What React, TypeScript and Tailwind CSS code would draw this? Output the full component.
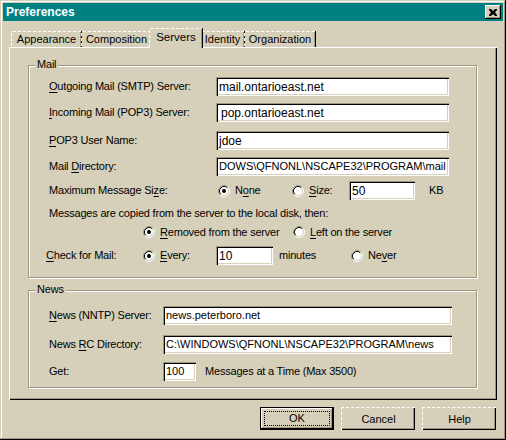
import React from "react";

const BG = "bg-[#d6d0ba]";

function U({ children }: { children: React.ReactNode }) {
  return <span className="underline decoration-1 underline-offset-[2px]">{children}</span>;
}

function Radio({ checked }: { checked?: boolean }) {
  return (
    <svg width="12" height="12" viewBox="0 0 12 12" className="shrink-0">
      <circle cx="6" cy="6" r="4.5" fill="#fff" />
      <path d="M2.11 9.89 A5.5 5.5 0 0 1 9.89 2.11" fill="none" stroke="#9d977f" />
      <path d="M9.89 2.11 A5.5 5.5 0 0 1 2.11 9.89" fill="none" stroke="#fff" />
      <path d="M2.82 9.18 A4.5 4.5 0 0 1 9.18 2.82" fill="none" stroke="#000" />
      <path d="M9.18 2.82 A4.5 4.5 0 0 1 2.82 9.18" fill="none" stroke="#d6d0ba" />
      {checked && <circle cx="6" cy="6" r="2" fill="#000" />}
    </svg>
  );
}

function Field({ value, className = "", small }: { value: string; className?: string; small?: boolean }) {
  return (
    <div
      className={`h-[19px] shrink-0 bg-white flex items-center pl-[3px] overflow-hidden whitespace-nowrap tracking-normal shadow-[inset_1px_1px_#9d977f,inset_2px_2px_#000,inset_-1px_-1px_#fff,inset_-2px_-2px_#d6d0ba] ${
        small ? "text-[11px]" : "text-[12px]"
      } ${className}`}
    >
      {value}
    </div>
  );
}

function Tab({ label, selected, className = "" }: { label: string; selected?: boolean; className?: string }) {
  if (selected) {
    return (
      <div
        className={`relative z-10 -mx-[2px] h-[20px] ${BG} border-t border-l border-dashed border-[#fff] rounded-tl-[2px] shadow-[inset_-1px_0_#9d977f,1px_0_#000] flex items-start justify-center pt-[3px] ${className}`}
      >
        {label}
      </div>
    );
  }
  return (
    <div
      className={`h-[16px] mb-[1px] border-t border-l border-dashed border-[#fff] rounded-tl-[2px] shadow-[inset_-1px_0_#9d977f,1px_0_#000] flex items-center justify-center ${className}`}
    >
      {label}
    </div>
  );
}

function GroupBox({ title, className = "", children }: { title: string; className?: string; children: React.ReactNode }) {
  return (
    <div className={`relative border border-[#9d977f] shadow-[inset_1px_1px_#fff,1px_1px_#fff] ${className}`}>
      <span className={`absolute -top-[7px] left-[6px] px-[2px] leading-none ${BG}`}>{title}</span>
      {children}
    </div>
  );
}

function Button({ label, isDefault }: { label: string; isDefault?: boolean }) {
  if (isDefault) {
    return (
      <div className="w-[74px] h-[23px] border border-black shadow-[inset_-1px_-1px_#000,inset_1px_1px_#fff,inset_-2px_-2px_#9d977f] p-[3px]">
        <div className="w-full h-full border border-dotted border-black flex items-center justify-center">{label}</div>
      </div>
    );
  }
  return (
    <div className="w-[74px] h-[23px] border-t border-l border-dashed border-[#fff] shadow-[inset_-1px_-1px_#000,inset_-2px_-2px_#9d977f] flex items-center justify-center">
      {label}
    </div>
  );
}

export default function App() {
  return (
    <div
      className={`w-[506px] h-[440px] overflow-hidden ${BG} text-black text-[11px] leading-none tracking-[-0.2px] font-['Liberation_Sans',Arial,sans-serif] shadow-[inset_-1px_-1px_#000,inset_1px_1px_#d6d0ba,inset_-2px_-2px_#9d977f,inset_2px_2px_#fff] pt-[3px]`}
    >
      {/* Title bar */}
      <div className="mx-[3px] h-[18px] bg-[#008080] flex items-center justify-between pl-[3px] pr-[2px]">
        <span className="text-white font-bold text-[12px] tracking-normal">Preferences</span>
        <div className={`w-[16px] h-[14px] ${BG} shadow-[inset_-1px_-1px_#000,inset_1px_1px_#fff,inset_-2px_-2px_#9d977f] flex items-center justify-center`}>
          <svg width="8" height="7" viewBox="0 0 8 7">
            <path d="M0 0h2l2 2 2-2h2v1L6 3.5 8 6v1H6L4 5 2 7H0V6l2-2.5L0 1z" fill="#000" />
          </svg>
        </div>
      </div>

      {/* Tabs */}
      <div className="flex items-end h-[20px] mt-[7px] ml-[11px] tracking-normal">
        <Tab label="Appearance" className="w-[70px]" />
        <Tab label="Composition" className="w-[70px]" />
        <Tab label="Servers" selected className="w-[53px] text-[11.5px]" />
        <Tab label="Identity" className="w-[44px]" />
        <Tab label="Organization" className="w-[71px]" />
      </div>

      {/* Panel */}
      <div className="relative -mt-[1px] ml-[9px] w-[488px] h-[353px] border-t border-l border-[#fff] shadow-[inset_-1px_-1px_#000,inset_-2px_-2px_#9d977f] pt-[17px] pl-[18px]">
        <GroupBox title="Mail" className="w-[449px] h-[213px] pl-[20px] pt-[11px]">
          <div className="flex items-center h-[19px]">
            <span className="w-[167px]">
              <U>O</U>utgoing Mail (SMTP) Server:
            </span>
            <Field value="mail.ontarioeast.net" className="w-[233px]" />
          </div>
          <div className="flex items-center h-[19px] mt-[7px]">
            <span className="w-[167px]">
              <U>I</U>ncoming Mail (POP3) Server:
            </span>
            <Field value="pop.ontarioeast.net" className="w-[233px] pl-[5px]" />
          </div>
          <div className="flex items-center h-[19px] mt-[9px]">
            <span className="w-[167px]">
              <U>P</U>OP3 User Name:
            </span>
            <Field value="jdoe" className="w-[233px]" />
          </div>
          <div className="flex items-center h-[19px] mt-[7px]">
            <span className="w-[167px]">
              Mail <U>D</U>irectory:
            </span>
            <Field value="DOWS\QFNONL\NSCAPE32\PROGRAM\mail" small className="w-[233px] pl-[2px]" />
          </div>
          <div className="flex items-center h-[19px] mt-[5px]">
            <span className="w-[169px]">
              Maximum Message Si<U>z</U>e:
            </span>
            <div className="flex items-center gap-[5px] w-[74px]">
              <Radio checked />
              <span>
                N<U>o</U>ne
              </span>
            </div>
            <div className="flex items-center gap-[5px] w-[57px]">
              <Radio />
              <span>
                <U>S</U>ize:
              </span>
            </div>
            <Field value="50" className="w-[66px]" />
            <span className="ml-[14px]">KB</span>
          </div>
          <div className="flex items-center h-[14px] mt-[6px]">Messages are copied from the server to the local disk, then:</div>
          <div className="flex items-center h-[14px] mt-[5px] ml-[94px]">
            <div className="flex items-center gap-[5px] w-[150px]">
              <Radio checked />
              <span>
                <U>R</U>emoved from the server
              </span>
            </div>
            <div className="flex items-center gap-[5px]">
              <Radio />
              <span>
                <U>L</U>eft on the server
              </span>
            </div>
          </div>
          <div className="flex items-center h-[19px] mt-[7px] -ml-[3px]">
            <span className="w-[97px]">
              <U>C</U>heck for Mail:
            </span>
            <div className="flex items-center gap-[5px] w-[73px]">
              <Radio checked />
              <span>
                <U>E</U>very:
              </span>
            </div>
            <Field value="10" className="w-[57px]" />
            <span className="w-[78px] pl-[6px]">minutes</span>
            <div className="flex items-center gap-[5px]">
              <Radio />
              <span>
                Ne<U>v</U>er
              </span>
            </div>
          </div>
        </GroupBox>

        <GroupBox title="News" className="mt-[12px] w-[449px] h-[98px] pl-[20px] pt-[15px]">
          <div className="flex items-center h-[19px]">
            <span className="w-[114px]">
              <U>N</U>ews (NNTP) Server:
            </span>
            <Field value="news.peterboro.net" small className="w-[289px]" />
          </div>
          <div className="flex items-center h-[19px] mt-[10px]">
            <span className="w-[114px]">
              News <U>R</U>C Directory:
            </span>
            <Field value="C:\WINDOWS\QFNONL\NSCAPE32\PROGRAM\news" small className="w-[289px]" />
          </div>
          <div className="flex items-center h-[19px] mt-[8px]">
            <span className="w-[114px]">Get:</span>
            <Field value="100" small className="w-[33px]" />
            <span className="ml-[9px]">Messages at a Time (Max 3500)</span>
          </div>
        </GroupBox>
      </div>

      {/* Buttons */}
      <div className="flex justify-end gap-[7px] mt-[7px] pr-[10px] tracking-normal">
        <Button label="OK" isDefault />
        <Button label="Cancel" />
        <Button label="Help" />
      </div>
    </div>
  );
}
